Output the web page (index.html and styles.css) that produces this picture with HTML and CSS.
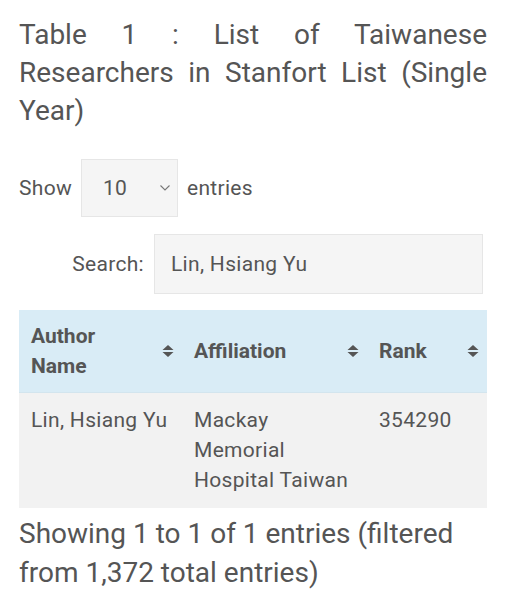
FILE: index.html
```html
<!DOCTYPE html>
<html>
<head>
<meta charset="utf-8">
<link rel="stylesheet" href="styles.css">
</head>
<body>
<div class="page">
  <h2 class="title">Table 1 : List of Taiwanese Researchers in Stanfort List (Single Year)</h2>
  <div class="length">
    <span>Show</span>
    <div class="select"><span>10</span>
      <svg class="chev" width="10" height="6" viewBox="0 0 10 6"><path d="M0.5 0.5 L5 5 L9.5 0.5" fill="none" stroke="#777" stroke-width="1.1"/></svg>
    </div>
    <span>entries</span>
  </div>
  <div class="filter">
    <span>Search:</span>
    <div class="input">Lin, Hsiang Yu</div>
  </div>
  <table class="data">
    <thead>
      <tr>
        <th class="c1"><div class="th"><span>Author<br>Name</span><svg class="sort" width="12" height="14" viewBox="0 0 12 14"><path d="M6 1 L11.5 6 L0.5 6 Z M0.5 8 L11.5 8 L6 13 Z" fill="#555"/></svg></div></th>
        <th class="c2"><div class="th"><span>Affiliation</span><svg class="sort" width="12" height="14" viewBox="0 0 12 14"><path d="M6 1 L11.5 6 L0.5 6 Z M0.5 8 L11.5 8 L6 13 Z" fill="#555"/></svg></div></th>
        <th class="c3"><div class="th"><span>Rank</span><svg class="sort" width="12" height="14" viewBox="0 0 12 14"><path d="M6 1 L11.5 6 L0.5 6 Z M0.5 8 L11.5 8 L6 13 Z" fill="#555"/></svg></div></th>
      </tr>
    </thead>
    <tbody>
      <tr>
        <td>Lin, Hsiang Yu</td>
        <td>Mackay<br>Memorial<br>Hospital Taiwan</td>
        <td>354290</td>
      </tr>
    </tbody>
  </table>
  <p class="info">Showing 1 to 1 of 1 entries (filtered from 1,372 total entries)</p>
</div>
</body>
</html>
```
FILE: styles.css
```css
html, body {
  margin: 0;
  padding: 0;
  background: #fff;
}
body {
  font-family: Roboto, "Liberation Sans", sans-serif;
  color: #555;
}
.page {
  padding: 16px 21px 0 19px;
}
.title {
  margin: 0;
  font-size: 28px;
  line-height: 38px;
  font-weight: 400;
  text-align: justify;
}
.length {
  display: flex;
  align-items: center;
  gap: 9px;
  margin-top: 29px;
  font-size: 21px;
  letter-spacing: 0.3px;
}
.select {
  width: 95px;
  height: 56px;
  border: 1px solid #e6e6e6;
  background: #f5f5f5;
  display: flex;
  align-items: center;
  justify-content: space-between;
  padding: 0 7px 0 0;
  width: 88px;
}
.select span {
  padding-left: 21px;
}
.filter {
  display: flex;
  justify-content: flex-end;
  align-items: center;
  gap: 10px;
  margin-top: 17px;
  margin-right: 4px;
  font-size: 21px;
  letter-spacing: 0.3px;
}
.input {
  width: 311px;
  height: 58px;
  border: 1px solid #e6e6e6;
  background: #f5f5f5;
  display: flex;
  align-items: center;
  padding-left: 16px;
}
.data {
  width: 100%;
  border-collapse: collapse;
  margin-top: 16px;
  font-size: 21px;
  line-height: 30px;
  letter-spacing: 0.3px;
}
.data th {
  background: #d9ecf6;
  text-align: left;
  font-weight: 700;
  letter-spacing: 0;
  padding: 11px 8px 11px 12px;
  border-bottom: 1px solid #d3e5ee;
}
.th {
  display: flex;
  align-items: center;
  justify-content: space-between;
}
.c1 { width: 143px; }
.c2 { width: 165px; }
.data td {
  background: #f2f2f2;
  vertical-align: top;
  padding: 12px 8px 13px 12px;
}
.info {
  margin: 6px 0 0;
  font-size: 28px;
  line-height: 39px;
}
```
